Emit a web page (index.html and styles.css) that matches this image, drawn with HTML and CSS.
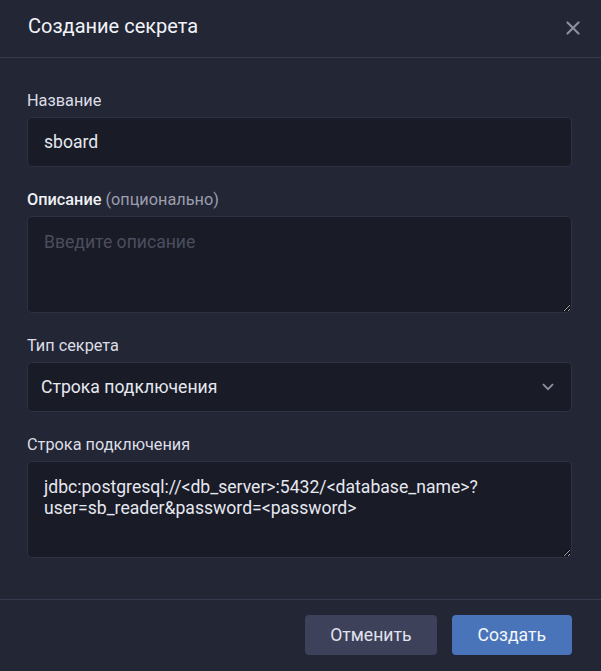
FILE: index.html
```html
<!DOCTYPE html>
<html lang="ru">

<head>
    <meta charset="UTF-8">
    <meta name="viewport" content="width=device-width, initial-scale=1.0">
    <title>Создание секрета</title>
    <link rel="stylesheet" href="styles.css">
</head>

<body>
    <div class="modal">
        <!-- шапка окна -->
        <div class="modal-header">
            <h2 class="modal-title">Создание секрета</h2>
            <a href="javascript:;" class="modal-close" title="Закрыть">
                <svg width="14" height="14" viewBox="0 0 14 14">
                    <path d="M1.5 1.5L12.5 12.5M12.5 1.5L1.5 12.5" stroke="currentColor" stroke-width="2.2" stroke-linecap="round" />
                </svg>
            </a>
        </div>

        <!-- форма -->
        <div class="modal-body">
            <div class="field">
                <label class="field-label" for="name">Название</label>
                <input class="input" id="name" type="text" value="sboard">
            </div>
            <div class="field">
                <label class="field-label field-label-strong" for="desc">Описание <span class="optional">(опционально)</span></label>
                <textarea class="input textarea" id="desc" placeholder="Введите описание"></textarea>
            </div>
            <div class="field">
                <label class="field-label">Тип секрета</label>
                <div class="select">
                    <span>Строка подключения</span>
                    <svg width="12" height="8" viewBox="0 0 12 8">
                        <path d="M1 1.2L6 6.2L11 1.2" fill="none" stroke="currentColor" stroke-width="1.8" />
                    </svg>
                </div>
            </div>
            <div class="field">
                <label class="field-label" for="conn">Строка подключения</label>
                <textarea class="input textarea" id="conn">jdbc:postgresql://&lt;db_server&gt;:5432/&lt;database_name&gt;?user=sb_reader&amp;password=&lt;password&gt;</textarea>
            </div>
        </div>

        <!-- кнопки -->
        <div class="modal-footer">
            <button class="btn btn-cancel">Отменить</button>
            <button class="btn btn-primary">Создать</button>
        </div>
    </div>
</body>

</html>
```

FILE: styles.css
```css
* {
    box-sizing: border-box;
}

body {
    margin: 0;
    background: #232634;
    font-family: Roboto, "Noto Sans", sans-serif;
    color: #e3e5ee;
}

.modal {
    width: 601px;
    height: 671px;
    background: #232634;
}

.modal-header {
    display: flex;
    justify-content: space-between;
    align-items: flex-start;
    height: 58px;
    padding: 14px 21px 0 28px;
    border-bottom: 1px solid #363a4f;
}

.modal-title {
    margin: 0;
    font-size: 20px;
    line-height: 24px;
    font-weight: 400;
    color: #f1f3f9;
}

.modal-close {
    display: block;
    width: 14px;
    height: 14px;
    margin-top: 7px;
    color: #8b8e9e;
}

.modal-close svg {
    display: block;
}

.modal-body {
    display: flex;
    flex-direction: column;
    gap: 23px;
    padding: 33px 29px 41px 27px;
}

.field {
    display: flex;
    flex-direction: column;
}

.field-label {
    margin-bottom: 6px;
    font-size: 16.3px;
    line-height: 20px;
    color: #dcdee7;
}

.field-label-strong {
    font-weight: 500;
    color: #eef0f6;
}

.optional {
    font-weight: 400;
    color: #9b9eae;
}

.input {
    display: block;
    width: 100%;
    height: 50px;
    padding: 0 16px;
    background: #191b26;
    border: 1px solid #2e3143;
    border-radius: 5px;
    font-family: Roboto, "Noto Sans", sans-serif;
    font-size: 17.6px;
    color: #e6e8f0;
    outline: none;
}

.textarea {
    height: 97px;
    padding: 15px 16px;
    line-height: 21px;
    resize: vertical;
    color-scheme: dark;
}

.textarea::placeholder {
    color: #4b4e5e;
}

.select {
    display: flex;
    justify-content: space-between;
    align-items: center;
    height: 50px;
    padding: 0 17px 0 13px;
    background: #191b26;
    border: 1px solid #2e3143;
    border-radius: 5px;
    font-size: 17.6px;
    color: #e6e8f0;
}

.select svg {
    color: #8d90a0;
}

.modal-footer {
    display: flex;
    justify-content: flex-end;
    gap: 15px;
    padding: 15px 29px 0 0;
    border-top: 1px solid #363a4f;
}

.btn {
    height: 40px;
    padding: 0 25px;
    border: 0;
    border-radius: 4px;
    font-family: Roboto, "Noto Sans", sans-serif;
    font-size: 17.6px;
    cursor: pointer;
}

.btn-cancel {
    background: #3d4159;
    color: #e1e4ef;
}

.btn-primary {
    padding: 0 26px;
    background: #4a74b9;
    color: #f4f6fb;
}
```
